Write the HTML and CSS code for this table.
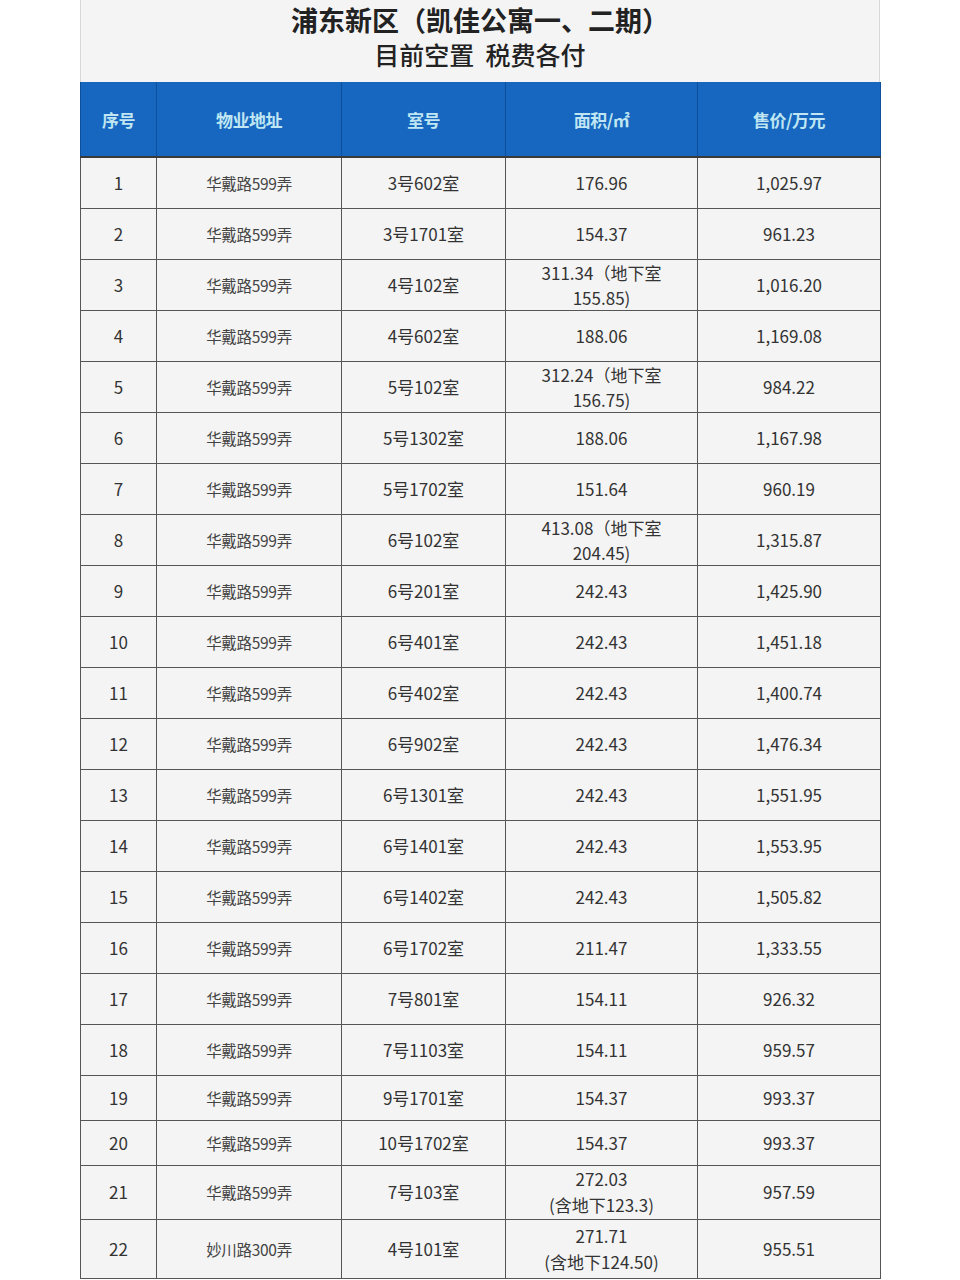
FILE: index.html
```html
<!DOCTYPE html>
<html lang="zh">
<head>
<meta charset="utf-8">
<link rel="stylesheet" href="styles.css">
</head>
<body>
<div class="sheet">
  <div class="title">
    <div class="t1">浦东新区（凯佳公寓一、二期）</div>
    <div class="t2">目前空置&nbsp; 税费各付</div>
  </div>
  <table class="grid">
    <colgroup>
      <col class="c1"><col class="c2"><col class="c3"><col class="c4"><col class="c5">
    </colgroup>
    <thead>
      <tr><th>序号</th><th>物业地址</th><th>室号</th><th>面积/㎡</th><th>售价/万元</th></tr>
    </thead>
    <tbody>
      <tr><td>1</td><td class="addr">华戴路599弄</td><td>3号602室</td><td>176.96</td><td>1,025.97</td></tr>
      <tr><td>2</td><td class="addr">华戴路599弄</td><td>3号1701室</td><td>154.37</td><td>961.23</td></tr>
      <tr><td>3</td><td class="addr">华戴路599弄</td><td>4号102室</td><td class="two">311.34（地下室<br>155.85)</td><td>1,016.20</td></tr>
      <tr><td>4</td><td class="addr">华戴路599弄</td><td>4号602室</td><td>188.06</td><td>1,169.08</td></tr>
      <tr><td>5</td><td class="addr">华戴路599弄</td><td>5号102室</td><td class="two">312.24（地下室<br>156.75)</td><td>984.22</td></tr>
      <tr><td>6</td><td class="addr">华戴路599弄</td><td>5号1302室</td><td>188.06</td><td>1,167.98</td></tr>
      <tr><td>7</td><td class="addr">华戴路599弄</td><td>5号1702室</td><td>151.64</td><td>960.19</td></tr>
      <tr><td>8</td><td class="addr">华戴路599弄</td><td>6号102室</td><td class="two">413.08（地下室<br>204.45)</td><td>1,315.87</td></tr>
      <tr><td>9</td><td class="addr">华戴路599弄</td><td>6号201室</td><td>242.43</td><td>1,425.90</td></tr>
      <tr><td>10</td><td class="addr">华戴路599弄</td><td>6号401室</td><td>242.43</td><td>1,451.18</td></tr>
      <tr><td>11</td><td class="addr">华戴路599弄</td><td>6号402室</td><td>242.43</td><td>1,400.74</td></tr>
      <tr><td>12</td><td class="addr">华戴路599弄</td><td>6号902室</td><td>242.43</td><td>1,476.34</td></tr>
      <tr><td>13</td><td class="addr">华戴路599弄</td><td>6号1301室</td><td>242.43</td><td>1,551.95</td></tr>
      <tr><td>14</td><td class="addr">华戴路599弄</td><td>6号1401室</td><td>242.43</td><td>1,553.95</td></tr>
      <tr><td>15</td><td class="addr">华戴路599弄</td><td>6号1402室</td><td>242.43</td><td>1,505.82</td></tr>
      <tr><td>16</td><td class="addr">华戴路599弄</td><td>6号1702室</td><td>211.47</td><td>1,333.55</td></tr>
      <tr><td>17</td><td class="addr">华戴路599弄</td><td>7号801室</td><td>154.11</td><td>926.32</td></tr>
      <tr><td>18</td><td class="addr">华戴路599弄</td><td>7号1103室</td><td>154.11</td><td>959.57</td></tr>
      <tr class="short"><td>19</td><td class="addr">华戴路599弄</td><td>9号1701室</td><td>154.37</td><td>993.37</td></tr>
      <tr class="short"><td>20</td><td class="addr">华戴路599弄</td><td>10号1702室</td><td>154.37</td><td>993.37</td></tr>
      <tr class="r21"><td>21</td><td class="addr">华戴路599弄</td><td>7号103室</td><td class="two">272.03<br>(含地下123.3)</td><td>957.59</td></tr>
      <tr class="r22"><td>22</td><td class="addr">妙川路300弄</td><td>4号101室</td><td class="two">271.71<br>(含地下124.50)</td><td>955.51</td></tr>
    </tbody>
  </table>
</div>
</body>
</html>
```

FILE: styles.css
```css
html, body {
  margin: 0;
  padding: 0;
  background: #ffffff;
}
body {
  font-family: "Noto Sans CJK SC", "Noto Sans", sans-serif;
  color: #333;
}
.sheet {
  width: 800px;
  margin-left: 80px;
  background: #f4f4f4;
}
.title {
  height: 82px;
  box-sizing: border-box;
  border-left: 1px solid #d8d8d8;
  border-right: 1px solid #d8d8d8;
  text-align: center;
  color: #222;
  padding-top: 3px;
}
.t1 {
  font-size: 27px;
  line-height: 34px;
  font-weight: 700;
}
.t2 {
  font-size: 25px;
  line-height: 34px;
  font-weight: 500;
}
.grid {
  width: 800px;
  border-collapse: collapse;
  table-layout: fixed;
}
.c1 { width: 76px; }
.c2 { width: 185px; }
.c3 { width: 164px; }
.c4 { width: 192px; }
.c5 { width: 183px; }
.grid th {
  height: 75px;
  box-sizing: border-box;
  background: #1766bf;
  color: #bfe6f2;
  font-size: 17px;
  font-weight: 700;
  border-left: 1px solid #0e4f9c;
  border-right: 1px solid #0e4f9c;
  border-bottom: 2px solid #3a3a3a;
  padding: 0;
  letter-spacing: -0.5px;
}
.grid td {
  height: 51px;
  box-sizing: border-box;
  border: 1.5px solid #555;
  text-align: center;
  vertical-align: middle;
  font-size: 17px;
  padding: 0;
  background: #f4f4f4;
  color: #333;
  line-height: 22px;
}
.grid td.addr {
  font-size: 15.5px;
  color: #444;
  letter-spacing: -0.3px;
}
.grid td.two {
  line-height: 25px;
  font-size: 17px;
}
.grid tr.short td { height: 45px; }
.grid tr.r21 td { height: 54px; }
.grid tr.r22 td { height: 59px; }
.grid tr.r21 td.two, .grid tr.r22 td.two { line-height: 26px; }
```
